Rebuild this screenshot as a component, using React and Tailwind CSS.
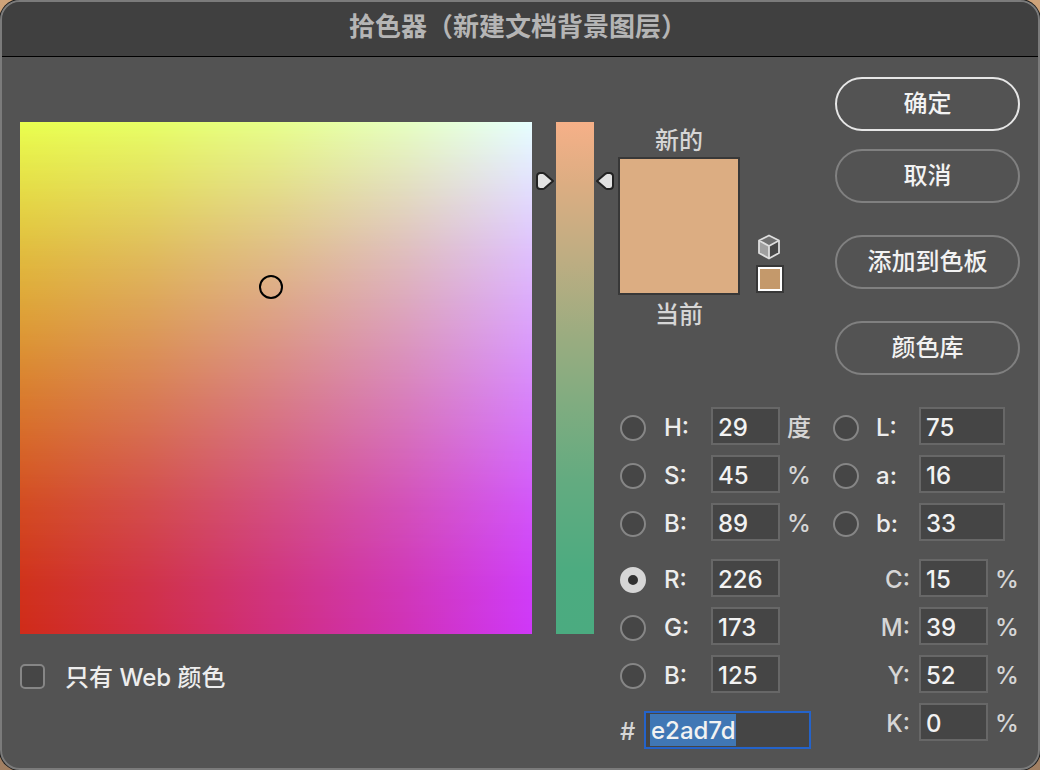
import { useState } from "react";

const FIELD =
  "h-[38px] border-2 border-[#676767] bg-[#454545] pt-0.5 pl-[5px] text-2xl font-medium text-[#f2f2f2] outline-none";

function Radio({ id, checked, onChange }) {
  return (
    <input
      type="radio"
      name="channel"
      id={id}
      checked={checked}
      onChange={onChange}
      className="mt-1 size-[26px] shrink-0 appearance-none rounded-full border-2 border-[#868686] bg-[#464646] checked:border-[8px] checked:border-[#d6d6d6] checked:bg-[#303030]"
    />
  );
}

function ChannelRow({ id, label, unit, value, channel, setChannel, wide }) {
  return (
    <div className="flex h-[38px] items-center">
      <Radio id={id} checked={channel === id} onChange={() => setChannel(id)} />
      <label
        htmlFor={id}
        className={
          wide
            ? "mt-1 ml-[17px] w-[43px] text-2xl font-medium text-[#ededed]"
            : "mt-1 ml-[18px] w-[47px] text-2xl font-medium text-[#ededed]"
        }
      >
        {label}
      </label>
      <input
        type="text"
        aria-label={label}
        defaultValue={value}
        className={wide ? `${FIELD} w-[86px]` : `${FIELD} w-[69px]`}
      />
      {unit && <span className="mt-1 ml-[7px] text-2xl font-medium text-[#d6d6d6]">{unit}</span>}
    </div>
  );
}

function InkRow({ id, label, value }) {
  return (
    <div className="flex h-[38px] items-center justify-end">
      <label htmlFor={id} className="mt-1 mr-[9px] text-2xl font-medium text-[#d6d6d6]">
        {label}
      </label>
      <input id={id} type="text" defaultValue={value} className={`${FIELD} w-[69px]`} />
      <span className="mt-1 ml-[7px] w-[25px] text-2xl font-medium text-[#d6d6d6]">%</span>
    </div>
  );
}

function PillButton({ children, primary }) {
  return (
    <button
      type="button"
      className={
        primary
          ? "h-[54px] w-full rounded-full border-2 border-[#e6e6e6] text-2xl font-medium text-[#f2f2f2]"
          : "h-[54px] w-full rounded-full border-2 border-[#808080] text-2xl font-medium text-[#f2f2f2]"
      }
    >
      {children}
    </button>
  );
}

function Pointer({ flipped }) {
  return (
    <svg
      width="18"
      height="20"
      viewBox="0 0 18 20"
      className={flipped ? "-scale-x-100" : ""}
      aria-hidden="true"
    >
      <path
        d="M4.5 2H6.6Q7.6 2 8.6 2.8L17 10L8.6 17.2Q7.6 18 6.6 18H4.5Q1 18 1 14.5V5.5Q1 2 4.5 2Z"
        fill="#e2e2e2"
        stroke="#222"
        strokeWidth="2"
        strokeLinejoin="round"
      />
    </svg>
  );
}

function Cube() {
  return (
    <svg width="24" height="26" viewBox="0 0 24 26" aria-hidden="true">
      <path d="M12 1.5L22 6.5L12 12L2 6.5Z" fill="#6f6f6f" />
      <path d="M2 6.5L12 12V24.5L2 19Z" fill="#a0a0a0" />
      <path d="M22 6.5L12 12V24.5L22 19Z" fill="#484848" />
      <path
        d="M12 1.5L22 6.5V19L12 24.5L2 19V6.5ZM2 6.5L12 12L22 6.5M12 12V24.5"
        fill="none"
        stroke="#dedede"
        strokeWidth="1.8"
        strokeLinejoin="round"
      />
    </svg>
  );
}

export default function App() {
  const [channel, setChannel] = useState("r");
  const shared = { channel, setChannel };

  return (
    <div className="flex min-h-screen bg-[linear-gradient(#cfa379,#a17f62)] font-['Inter','Noto_Sans_CJK_SC',sans-serif]">
      <main className="flex min-w-0 flex-1 flex-col overflow-hidden rounded-[20px] border-2 border-[#7b7b7b] bg-[#535353] shadow-[0_0_0_1px_#1c1c1c]">
        <header className="flex h-[55px] items-center justify-center border-b border-black bg-[#404040] pr-1 pb-1">
          <h1 className="text-[26px] leading-8 font-bold text-[#b5b5b5]">
            拾色器（新建文档背景图层）
          </h1>
        </header>

        <div className="flex flex-1 justify-between px-[18px]">
          <section className="pt-[65px]">
            <div className="flex">
              <div className="relative size-[512px] bg-[linear-gradient(to_right,#d02c1a,#d02d48_25%,#d02f80_50%,#d032b8_75%,#cf38f8)]">
                <div className="size-full bg-[linear-gradient(to_right,#e9ff4f,#e7ff66_25%,#e7ff8c_50%,#e6ffc0_75%,#e6ffff)] mask-[linear-gradient(to_bottom,black,rgba(0,0,0,0.69)_25%,rgba(0,0,0,0.42)_50%,rgba(0,0,0,0.15)_75%,rgba(0,0,0,0.03)_90%,transparent)]" />
                <svg
                  width="26"
                  height="26"
                  viewBox="0 0 26 26"
                  className="absolute top-[152px] left-[238px]"
                  aria-hidden="true"
                >
                  <circle cx="13" cy="13" r="11" fill="none" stroke="#000" strokeWidth="2" />
                </svg>
              </div>
              <div className="flex pl-1">
                <div className="pt-[49px]">
                  <Pointer />
                </div>
                <div className="ml-0.5 h-[512px] w-[38px] bg-[linear-gradient(#f6b088,#dcad82_12%,#bdad82_27%,#9aac80_42%,#80ac80_55%,#63ab80_70%,#4cab80_88%,#4bab80)]" />
                <div className="ml-0.5 pt-[49px]">
                  <Pointer flipped />
                </div>
              </div>
            </div>
            <div className="mt-7 flex items-center">
              <input
                id="web-only"
                type="checkbox"
                className="mb-1 size-[25px] appearance-none rounded-[5px] border-2 border-[#868686] bg-[#464646] checked:bg-[#d6d6d6]"
              />
              <label htmlFor="web-only" className="pl-5 text-2xl font-medium text-[#ededed]">
                只有 Web 颜色
              </label>
            </div>
          </section>

          <section className="flex w-[402px] flex-col pt-5">
            <div className="flex justify-between">
              <div className="flex pt-12">
                <div className="flex w-[122px] flex-col items-center text-2xl font-medium text-[#d6d6d6]">
                  <span>新的</span>
                  <div className="h-[138px] w-full border-2 border-[#383838] bg-[#dcad82]" />
                  <span className="mt-1">当前</span>
                </div>
                <div className="flex flex-col items-center gap-[5px] pt-[109px] pl-4">
                  <div className="h-[26px] pr-0.5">
                    <Cube />
                  </div>
                  <button
                    type="button"
                    aria-label="Web"
                    className="size-7 border-2 border-[#383838] bg-[#c4996b] p-0"
                  >
                    <span className="block size-full border-2 border-white" />
                  </button>
                </div>
              </div>
              <div className="flex w-[185px] flex-col">
                <PillButton primary>确定</PillButton>
                <div className="mt-[18px] flex flex-col gap-8">
                  <PillButton>取消</PillButton>
                  <PillButton>添加到色板</PillButton>
                  <PillButton>颜色库</PillButton>
                </div>
              </div>
            </div>

            <div className="mt-8 flex justify-between">
              <div className="flex flex-col gap-[18px] pl-0.5">
                <div className="flex flex-col gap-[10px]">
                  <ChannelRow id="h" label="H:" value="29" unit="度" {...shared} />
                  <ChannelRow id="s" label="S:" value="45" unit="%" {...shared} />
                  <ChannelRow id="v" label="B:" value="89" unit="%" {...shared} />
                </div>
                <div className="flex flex-col gap-[10px]">
                  <ChannelRow id="r" label="R:" value="226" {...shared} />
                  <ChannelRow id="g" label="G:" value="173" {...shared} />
                  <ChannelRow id="bl" label="B:" value="125" {...shared} />
                </div>
                <div className="flex h-[38px] items-center">
                  <label htmlFor="hex" className="mt-1 w-6 text-2xl font-medium text-[#d6d6d6]">
                    #
                  </label>
                  <div className="flex h-[38px] w-[167px] items-center border-2 border-[#2463ca] bg-[#454545] pl-1">
                    <input
                      id="hex"
                      type="text"
                      defaultValue="e2ad7d"
                      className="h-8 w-[86px] bg-[#4077b5] pt-0.5 pl-px text-2xl font-medium text-[#f2f2f2] outline-none"
                    />
                  </div>
                </div>
              </div>
              <div className="flex w-[187px] flex-col gap-[18px]">
                <div className="flex flex-col gap-[10px]">
                  <ChannelRow id="lab-l" label="L:" value="75" wide {...shared} />
                  <ChannelRow id="lab-a" label="a:" value="16" wide {...shared} />
                  <ChannelRow id="lab-b" label="b:" value="33" wide {...shared} />
                </div>
                <div className="flex flex-col gap-[10px]">
                  <InkRow id="c" label="C:" value="15" />
                  <InkRow id="m" label="M:" value="39" />
                  <InkRow id="y" label="Y:" value="52" />
                  <InkRow id="k" label="K:" value="0" />
                </div>
              </div>
            </div>
          </section>
        </div>
      </main>
    </div>
  );
}
